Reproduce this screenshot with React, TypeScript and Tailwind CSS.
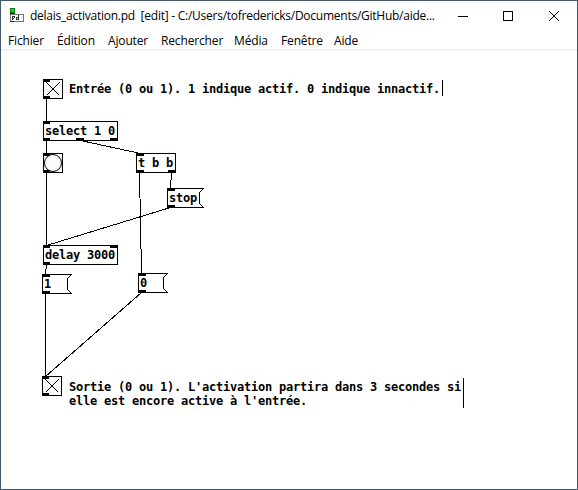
import React from 'react';

type Port = [number, number, number];

const menus = [
  { label: 'Fichier', cls: 'w-[35px]' },
  { label: 'Édition', cls: 'w-[37px]' },
  { label: 'Ajouter', cls: 'w-[39px]' },
  { label: 'Rechercher', cls: 'w-[59px]' },
  { label: 'Média', cls: 'w-[33px]' },
  { label: 'Fenêtre', cls: 'w-[39px]' },
  { label: 'Aide', cls: 'w-[25px]' },
];

// x, y, width of each plain box
const boxes: [number, number, number][] = [
  [43, 79, 20],
  [43, 121, 75],
  [43, 153, 20],
  [136, 153, 40],
  [43, 245, 75],
  [42, 376, 20],
];

// x, y, width of each message box
const messages: [number, number, number][] = [
  [167, 188, 37],
  [42, 274, 30],
  [138, 273, 30],
];

const ports: Port[] = [
  [43, 79, 7], [43, 96, 7],
  [43, 121, 7], [43, 138, 7], [76, 138, 8], [110, 138, 8],
  [43, 153, 7], [43, 170, 7],
  [136, 153, 8], [136, 170, 8], [168, 170, 8],
  [167, 188, 8], [167, 205, 8],
  [43, 245, 7], [110, 245, 8], [43, 262, 7],
  [42, 274, 8], [42, 291, 8],
  [138, 273, 8], [138, 290, 8],
  [42, 376, 7], [42, 393, 7],
];

const wires = [
  [46.5, 98, 46.5, 122],
  [46.5, 140, 46.5, 154],
  [80.5, 140.5, 140.5, 153.5],
  [46.5, 172, 46.5, 246],
  [139.5, 172.5, 141.5, 273.5],
  [171.5, 172.5, 170.5, 188.5],
  [170.5, 207.5, 46.5, 245.5],
  [46.5, 264.5, 45.5, 274.5],
  [45.5, 293, 45.5, 377],
  [141.5, 292.5, 45.5, 376.5],
];

function Patch() {
  return (
    <svg className="absolute inset-0" width="576" height="438" viewBox="1 51 576 438" shapeRendering="crispEdges" fill="none" stroke="black">
      {boxes.map(([x, y, w]) => (
        <rect key={`${x}-${y}`} x={x + 0.5} y={y + 0.5} width={w - 1} height={19} fill={w === 20 ? '#fcfcfc' : 'white'} />
      ))}
      {messages.map(([x, y, w]) => (
        <path key={`${x}-${y}`} d={`M${x + w - 0.5} ${y + 0.5}H${x + 0.5}V${y + 19.5}H${x + w - 0.5}L${x + w - 4.5} ${y + 15.5}V${y + 4.5}Z`} />
      ))}
      <path d="M46.5 82.5L59.5 95.5M59.5 82.5L46.5 95.5M45.5 379.5L58.5 392.5M58.5 379.5L45.5 392.5" />
      <circle cx="53" cy="163" r="8.5" shapeRendering="geometricPrecision" />
      {wires.map(([a, b, c, d]) => (
        <line key={`${a}-${b}-${c}`} x1={a} y1={b} x2={c} y2={d} />
      ))}
      {ports.map(([x, y, w]) => (
        <rect key={`${x}-${y}`} x={x} y={y} width={w} height="3" fill="black" stroke="none" />
      ))}
      <path d="M442.5 80V96M463.5 378V408" />
    </svg>
  );
}

function Label({ pos, children }: { pos: string; children: React.ReactNode }) {
  return <div className={`absolute whitespace-pre ${pos}`}>{children}</div>;
}

export default function App() {
  return (
    <div className="flex h-[490px] w-[578px] flex-col overflow-hidden border border-[#44586a] bg-white font-['Open_Sans','Noto_Sans',sans-serif] text-[12px] text-black">
      <header className="flex h-[30px] shrink-0 items-center pl-[9px]">
        <svg width="15" height="16" viewBox="0 0 15 16" shapeRendering="crispEdges" className="shrink-0">
          <rect x="0" y="0" width="5" height="5" fill="#087c16" />
          <rect x="1" y="1" width="3" height="3" fill="#08d42b" />
          <path d="M.5 6.5H13.5V13.5H.5Z" fill="#f6f6f6" stroke="#777" />
          <path d="M0 5.5H5M0 13.5H4" stroke="#222" />
          <path d="M2.5 8V12M3 8.5H4M4.5 8V10M3 10.5H4M6 9.5H8M6.5 9V12M6 11.5H8M8.5 7V12" stroke="#333" fill="none" />
        </svg>
        <h1 className="ml-[5px] w-[406px] whitespace-pre text-[12px] leading-4 tracking-[-0.25px]">delais_activation.pd  [edit] - C:/Users/tofredericks/Documents/GitHub/aide...</h1>
        <svg width="104" height="12" viewBox="0 0 104 12" fill="none" stroke="black" className="ml-[21px] shrink-0">
          <path d="M1 6.5H11M46.5 1.5H55.5V10.5H46.5Z" shapeRendering="crispEdges" />
          <path d="M92 1L102 11M102 1L92 11" />
        </svg>
      </header>
      <nav className="flex h-5 shrink-0 items-center gap-[14px] border-b-2 border-[#f0f0f0] pl-[7px] pt-[2px] tracking-[-0.15px]">
        {menus.map((m) => (
          <button key={m.label} className={`${m.cls} shrink-0 whitespace-nowrap text-left leading-4`}>{m.label}</button>
        ))}
      </nav>
      <main className="relative min-h-0 flex-1 font-['DejaVu_Sans_Mono','Liberation_Mono',monospace] text-[12px] leading-[14px] font-bold tracking-[-0.224px]">
        <Patch />
        <Label pos="left-[68px] top-[31px]">Entrée (0 ou 1). 1 indique actif. 0 indique innactif.</Label>
        <Label pos="left-[44px] top-[73px]">select 1 0</Label>
        <Label pos="left-[137px] top-[105px]">t b b</Label>
        <Label pos="left-[168px] top-[140px]">stop</Label>
        <Label pos="left-[44px] top-[197px]">delay 3000</Label>
        <Label pos="left-[43px] top-[226px]">1</Label>
        <Label pos="left-[139px] top-[225px]">0</Label>
        <Label pos="left-[68px] top-[329px]">{"Sortie (0 ou 1). L'activation partira dans 3 secondes si\nelle est encore active à l'entrée."}</Label>
      </main>
    </div>
  );
}
